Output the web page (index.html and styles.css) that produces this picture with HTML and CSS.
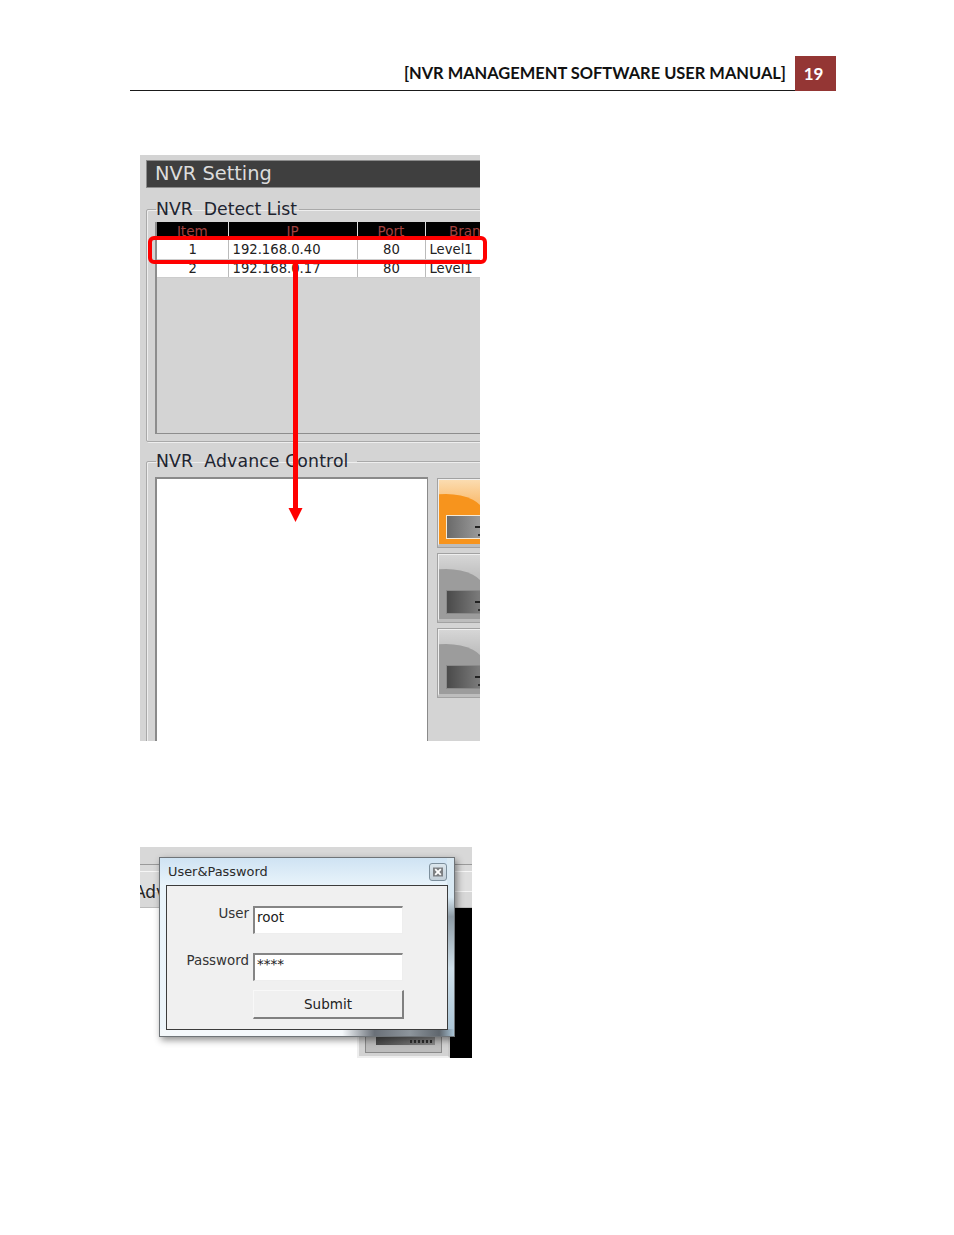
FILE: index.html
```html
<!DOCTYPE html>
<html lang="en">
<head>
<meta charset="utf-8">
<title>NVR Management Software User Manual</title>
<link rel="stylesheet" href="styles.css">
</head>
<body>
<div class="page">
  <header class="running-head">
    <span class="doc-title">[NVR MANAGEMENT SOFTWARE USER MANUAL]</span>
    <span class="page-no">19</span>
  </header>

  <figure class="shot shot-one">
    <div class="nvr">
      <div class="nvr-title">NVR Setting</div>
      <fieldset class="group group-detect">
        <legend>NVR&nbsp; Detect List</legend>
        <div class="list">
          <table class="grid">
            <colgroup><col class="c1"><col class="c2"><col class="c3"><col class="c4"></colgroup>
            <thead><tr><th>Item</th><th>IP</th><th>Port</th><th>Brand</th></tr></thead>
            <tbody>
              <tr class="row-first"><td class="mid">1</td><td>192.168.0.40</td><td class="mid">80</td><td>Level1</td></tr>
              <tr class="row-second"><td class="mid">2</td><td>192.168.0.17</td><td class="mid">80</td><td>Level1</td></tr>
            </tbody>
          </table>
        </div>
      </fieldset>
      <fieldset class="group group-advance">
        <legend>NVR&nbsp; Advance Control</legend>
        <div class="advance-body">
          <div class="white-box"></div>
          <div class="tiles">
            <div class="tile tile-on"><div class="dome"></div><div class="plate"></div></div>
            <div class="tile"><div class="dome"></div><div class="plate"></div></div>
            <div class="tile"><div class="dome"></div><div class="plate"></div></div>
          </div>
        </div>
      </fieldset>
    </div>
    <div class="callout"></div>
    <svg class="arrow" width="16" height="260" viewBox="0 0 16 260" aria-hidden="true">
      <rect x="5" y="0" width="5" height="245" fill="#f00"/>
      <polygon points="0.5,244 14.5,244 7.5,258" fill="#f00"/>
    </svg>
  </figure>

  <figure class="shot shot-two">
    <div class="backdrop">
      <div class="back-top"><span class="adv">Adv</span></div>
      <div class="back-bottom">
        <div class="back-white"></div>
        <div class="back-tile"><div class="back-inner"><div class="back-plate"></div></div></div>
        <div class="back-black"></div>
      </div>
    </div>
    <div class="dialog">
      <div class="dialog-head">
        <span class="dialog-title">User&amp;Password</span>
        <span class="close"><svg width="12" height="12" viewBox="0 0 12 12" aria-hidden="true"><rect x="1" y="1.500" width="10" height="9" fill="#7c7f82"/><path d="M3.200 3.200l5.600 5.600M8.800 3.200l-5.600 5.600" stroke="#fff" stroke-width="1.900" fill="none"/></svg></span>
      </div>
      <div class="dialog-body">
        <div class="form-row"><label>User</label><div class="field">root</div></div>
        <div class="form-row"><label>Password</label><div class="field">****</div></div>
        <div class="form-row submit-row"><span class="submit">Submit</span></div>
      </div>
    </div>
  </figure>
</div>
</body>
</html>
```
FILE: styles.css
```css
html, body { margin: 0; padding: 0; background: #fff; }
.page { width: 954px; height: 1235px; overflow: hidden; padding-top: 56px; box-sizing: border-box; font-family: "DejaVu Sans", sans-serif; }

.running-head { margin-left: 130px; width: 706px; height: 35px; border-bottom: 1px solid #1a1a1a; box-sizing: border-box; display: flex; justify-content: flex-end; align-items: center; font-family: Lato, "Liberation Sans", sans-serif; font-weight: 700; }
.doc-title { font-size: 16.45px; color: #111; margin-right: 9px; white-space: nowrap; }
.page-no { width: 41px; height: 35px; background: #943634; color: #fff; font-size: 17px; display: flex; align-items: center; justify-content: center; padding-right: 4px; box-sizing: border-box; }

.shot { margin: 0; position: relative; }
.shot-one { margin: 64px 0 0 140px; width: 340px; height: 586px; }
.shot-two { margin: 106px 0 0 140px; width: 332px; height: 211px; }

.nvr { width: 340px; height: 586px; background: #d4d4d4; overflow: hidden; padding: 5px 0 0 6px; box-sizing: border-box; }
.nvr-title { width: 360px; height: 28px; background: #3f3f3f; border: 1px solid #8c8c8c; box-sizing: border-box; color: #dcdcdc; font-size: 19.4px; line-height: 25px; padding-left: 8px; }

.group { margin: 0; padding: 0 0 0 9px; width: 400px; box-sizing: border-box; border: 1px solid #a9a9a9; box-shadow: inset 1px 1px 0 #eee, 1px 1px 0 #eee; border-radius: 2px; min-width: 0; }
.group legend { font-size: 17.3px; color: #1e2430; padding: 0 2px 0 0; line-height: 22px; white-space: nowrap; }
.group-detect { margin-top: 10px; height: 244px; }
.group-advance { margin-top: 8px; height: 300px; }
.group-advance legend { padding-right: 8px; letter-spacing: .12px; }

.list { width: 380px; height: 212px; margin: 2px 0 0 -1px; background: #d4d4d4; border: 1px solid #8d8d8d; border-top: 0; border-left-width: 2px; box-sizing: border-box; }
.grid { border-collapse: collapse; table-layout: fixed; width: 356px; font-size: 13.2px; }
.c1 { width: 71px; } .c2 { width: 129px; } .c3 { width: 68px; } .c4 { width: 88px; }
.grid th { background: #000; color: #a2413f; font-weight: 400; font-size: 13.5px; height: 17px; padding: 1px 0 0; line-height: 16px; border-right: 1px solid #ddd; text-align: center; overflow: hidden; box-sizing: border-box; }
.grid td { background: #fff; color: #222; padding: 0 0 0 4px; border-right: 1px solid #bbb; border-bottom: 1px solid #ccc; box-sizing: border-box; white-space: nowrap; }
.grid td.mid { text-align: center; padding-left: 1px; }
.row-first td { height: 20px; padding-top: 2px; line-height: 18px; }
.row-second td { height: 18px; line-height: 17px; }

.advance-body { display: flex; gap: 9px; margin-top: 5px; margin-left: -1px; }
.white-box { width: 273px; height: 290px; background: #fff; border: 1px solid #8a8a8a; border-width: 2px 1px 1px 2px; box-sizing: border-box; flex: none; }
.tiles { display: flex; flex-direction: column; gap: 5px; flex: none; margin-top: 1px; }
.tile { width: 70px; height: 70px; box-sizing: border-box; background: linear-gradient(#d6d6d6, #c2c2c2 30%, #b4b4b4); border: 2px solid #efefef; border-bottom: 4px solid #bdbdbd; outline: 1px solid #a2a2a2; outline-offset: -1px; position: relative; overflow: hidden; }
.dome { position: absolute; left: -31px; top: 14px; width: 76px; height: 80px; border-radius: 38px 38px 0 0 / 20px 20px 0 0; background: #9c9c9c; }
.plate { position: absolute; left: 7px; top: 35px; width: 60px; height: 24px; box-sizing: border-box; background: linear-gradient(90deg, #4a4a4a, #7a7a7a 55%, #6c6c6c); border: 1px solid #8a8a8a; }
.plate::before { content: ""; position: absolute; left: 28px; top: 10px; width: 8px; height: 2px; background: #222; }
.plate::after { content: ""; position: absolute; left: 31px; top: 18px; width: 6px; height: 2px; background: #333; }
.tile-on { background: linear-gradient(#fbdcb0, #fac27c 30%, #f9b968); }
.tile-on .dome { background: #f7941d; }
.tile-on .plate { border-color: #f6ead6; background: linear-gradient(90deg, #6a6a6a, #999 55%, #777); }

.callout { position: absolute; left: 8px; top: 81px; width: 339px; height: 28px; box-sizing: border-box; border: 4px solid #f00; border-radius: 6px; }
.arrow { position: absolute; left: 148px; top: 109px; }

.backdrop { width: 332px; height: 211px; overflow: hidden; display: flex; flex-direction: column; }
.back-top { height: 61px; background: linear-gradient(#d8d8d8 0 17px, #9a9a9a 17px 18px, #dadada 18px 24px, #f6f6f6 24px 25px, #dedede 25px 44px, #f4f4f4 44px 45px, #d8d8d8 45px); border-bottom: 1px solid #bbb; box-sizing: border-box; padding-top: 35px; overflow: hidden; }
.adv { font-size: 17px; line-height: 20px; color: #222; margin-left: -6px; display: block; }
.back-bottom { flex: 1; display: flex; }
.back-white { width: 217px; background: #fff; }
.back-tile { width: 93px; background: #d2d2d2; border: 2px solid #eee; border-right-color: #c8c8c8; box-sizing: border-box; padding: 0 6px 3px 6px; display: flex; }
.back-inner { flex: 1; border: 1px solid #8a8a8a; box-sizing: border-box; background: #bdbdbd; display: flex; align-items: flex-end; padding: 0 6px 7px 10px; }
.back-plate { flex: 1; height: 8px; background: linear-gradient(90deg, #4a4a4a, #8a8a8a); display: flex; justify-content: flex-end; align-items: center; padding-right: 3px; }
.back-plate::after { content: ""; width: 22px; height: 3px; background: repeating-linear-gradient(90deg, #2e2e2e 0 2px, transparent 2px 4px); }
.back-black { flex: 1; background: #000; }

.dialog { position: absolute; left: 19px; top: 10px; width: 296px; height: 180px; box-sizing: border-box; border: 1px solid #6f7478; background: linear-gradient(90deg, #f4f8fb 62%, #6a7078 73%, #8d959c 85%, #5f666d 95%, #a9c4d6) no-repeat bottom / 100% 7px, linear-gradient(#d9e9f3 22%, #8d9ba5 33%, #cfe0ea 62%, #a9c4d6) no-repeat right / 7px 100%, linear-gradient(#cfe3f3, #e9f4fb 28px, #eef5fa); box-shadow: 2px 3px 7px rgba(0,0,0,.45); padding: 0 6px 6px; display: flex; flex-direction: column; }
.dialog-head { height: 27px; display: flex; align-items: center; justify-content: space-between; flex: none; }
.dialog-title { font-size: 12.9px; color: #2a2a2a; margin-left: 2px; }
.close { width: 18px; height: 18px; box-sizing: border-box; border: 1px solid #7d8f9c; border-radius: 3px; background: linear-gradient(#dbe6ed, #c4d0d9); display: flex; align-items: center; justify-content: center; margin-right: 1px; }
.dialog-body { flex: 1; background: #f0f0f0; border: 1px solid #3c3c3c; box-sizing: border-box; padding-top: 20px; display: flex; flex-direction: column; }
.form-row { display: flex; gap: 4px; margin-bottom: 19px; }
.form-row label { width: 82px; text-align: right; font-size: 13.4px; color: #333; line-height: 16px; }
.field { width: 150px; height: 28px; box-sizing: border-box; background: #fff; border: 2px solid #858585; border-right: 1px solid #eee; border-bottom: 1px solid #eee; font-size: 13.5px; color: #222; line-height: 18px; padding-left: 2px; }
.submit-row { margin: -10px 0 0 86px; }
.submit { width: 151px; height: 29px; box-sizing: border-box; background: #f0f0f0; border: 1px solid #f8f8f8; border-right: 2px solid #808080; border-bottom: 2px solid #808080; font-size: 13.5px; color: #222; display: flex; align-items: center; justify-content: center; }
```
